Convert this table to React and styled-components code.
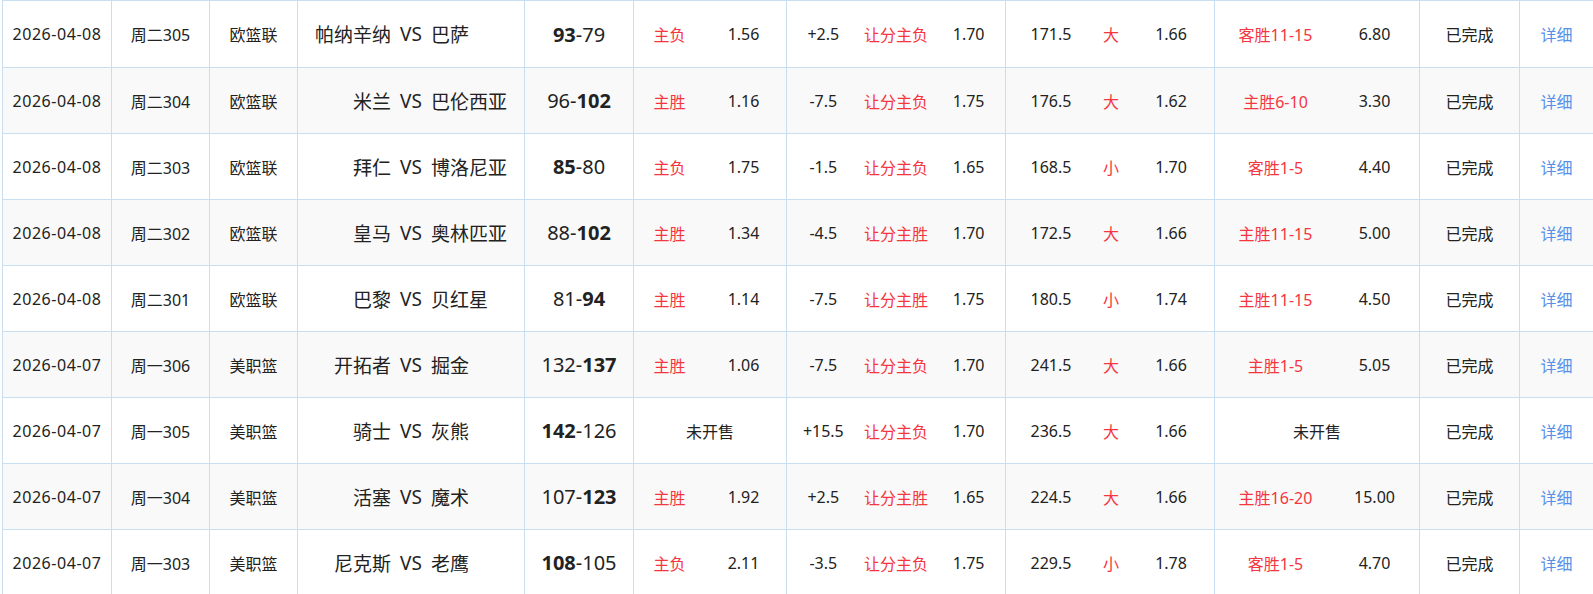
import React from "react";
import styled, { createGlobalStyle } from "styled-components";

const BORDER = "#c9def1";
const RED = "#f5363f";
const TEXT = "#222";
const BLUE = "#5690ea";

const GlobalStyle = createGlobalStyle`
  html, body {
    margin: 0;
    padding: 0;
    background: #fff;
    overflow: hidden;
  }
  body {
    font-family: "Noto Sans", "Noto Sans CJK SC", sans-serif;
    color: ${TEXT};
  }
  * { box-sizing: border-box; }
`;

const Table = styled.div`
  margin-left: 2px;
  width: 1592px;
  border-left: 1px solid ${BORDER};
  border-top: 1px solid ${BORDER};
`;

const Row = styled.div`
  display: grid;
  grid-template-columns: 109px 98px 88px 227px 109px 153px 219px 209px 205px 100px 74px;
  height: 66px;
  border-bottom: 1px solid ${BORDER};
  background: ${(p) => (p.$alt ? "#f9f9f9" : "#ffffff")};
  &:first-child {
    height: 67px;
  }
`;

const Cell = styled.div`
  display: flex;
  align-items: center;
  justify-content: center;
  border-right: 1px solid ${BORDER};
  font-size: 16px;
  white-space: nowrap;
  min-width: 0;
`;

const DateCell = styled(Cell)`
  letter-spacing: 0.55px;
`;

const Matchup = styled(Cell)`
  display: grid;
  grid-template-columns: 1fr auto 1fr;
  column-gap: 9px;
  align-items: center;
  font-size: 19px;
`;

const Home = styled.span`
  text-align: right;
`;

const Away = styled.span`
  text-align: left;
`;

const Vs = styled.span``;

const ScoreCell = styled(Cell)`
  font-size: 20px;
`;

const Win = styled.b`
  font-weight: 700;
`;

const Lose = styled.span`
  font-weight: 400;
`;

const Split = styled(Cell)`
  display: grid;
  grid-template-columns: ${(p) => p.$cols};
  justify-content: start;
  align-items: center;
  padding-left: ${(p) => p.$pad || 0}px;
`;

const Item = styled.span`
  text-align: center;
  color: ${(p) => (p.$red ? RED : TEXT)};
`;

const Detail = styled.a`
  color: ${BLUE};
  text-decoration: none;
  cursor: pointer;
`;

const rows = [
  { d: "2026-04-08", no: "周二305", lg: "欧篮联", h: "帕纳辛纳", a: "巴萨", hs: "93", as: "79", w: "h", r: ["主负", "1.56"], hc: ["+2.5", "让分主负", "1.70"], ou: ["171.5", "大", "1.66"], m: ["客胜11-15", "6.80"] },
  { d: "2026-04-08", no: "周二304", lg: "欧篮联", h: "米兰", a: "巴伦西亚", hs: "96", as: "102", w: "a", r: ["主胜", "1.16"], hc: ["-7.5", "让分主负", "1.75"], ou: ["176.5", "大", "1.62"], m: ["主胜6-10", "3.30"] },
  { d: "2026-04-08", no: "周二303", lg: "欧篮联", h: "拜仁", a: "博洛尼亚", hs: "85", as: "80", w: "h", r: ["主负", "1.75"], hc: ["-1.5", "让分主负", "1.65"], ou: ["168.5", "小", "1.70"], m: ["客胜1-5", "4.40"] },
  { d: "2026-04-08", no: "周二302", lg: "欧篮联", h: "皇马", a: "奥林匹亚", hs: "88", as: "102", w: "a", r: ["主胜", "1.34"], hc: ["-4.5", "让分主胜", "1.70"], ou: ["172.5", "大", "1.66"], m: ["主胜11-15", "5.00"] },
  { d: "2026-04-08", no: "周二301", lg: "欧篮联", h: "巴黎", a: "贝红星", hs: "81", as: "94", w: "a", r: ["主胜", "1.14"], hc: ["-7.5", "让分主胜", "1.75"], ou: ["180.5", "小", "1.74"], m: ["主胜11-15", "4.50"] },
  { d: "2026-04-07", no: "周一306", lg: "美职篮", h: "开拓者", a: "掘金", hs: "132", as: "137", w: "a", r: ["主胜", "1.06"], hc: ["-7.5", "让分主负", "1.70"], ou: ["241.5", "大", "1.66"], m: ["主胜1-5", "5.05"] },
  { d: "2026-04-07", no: "周一305", lg: "美职篮", h: "骑士", a: "灰熊", hs: "142", as: "126", w: "h", r: null, hc: ["+15.5", "让分主负", "1.70"], ou: ["236.5", "大", "1.66"], m: null },
  { d: "2026-04-07", no: "周一304", lg: "美职篮", h: "活塞", a: "魔术", hs: "107", as: "123", w: "a", r: ["主胜", "1.92"], hc: ["+2.5", "让分主胜", "1.65"], ou: ["224.5", "大", "1.66"], m: ["主胜16-20", "15.00"] },
  { d: "2026-04-07", no: "周一303", lg: "美职篮", h: "尼克斯", a: "老鹰", hs: "108", as: "105", w: "h", r: ["主负", "2.11"], hc: ["-3.5", "让分主负", "1.75"], ou: ["229.5", "小", "1.78"], m: ["客胜1-5", "4.70"] },
];

function Score({ hs, as, w }) {
  return (
    <ScoreCell>
      {w === "h" ? <Win>{hs}</Win> : <Lose>{hs}</Lose>}
      <Lose>-</Lose>
      {w === "a" ? <Win>{as}</Win> : <Lose>{as}</Lose>}
    </ScoreCell>
  );
}

export default function App() {
  return (
    <>
      <GlobalStyle />
      <Table>
        {rows.map((r, i) => (
          <Row key={i} $alt={i % 2 === 1}>
            <DateCell>{r.d}</DateCell>
            <Cell>{r.no}</Cell>
            <Cell>{r.lg}</Cell>
            <Matchup>
              <Home>{r.h}</Home>
              <Vs>VS</Vs>
              <Away>{r.a}</Away>
            </Matchup>
            <Score hs={r.hs} as={r.as} w={r.w} />
            {r.r ? (
              <Split $cols="71px 77px">
                <Item $red>{r.r[0]}</Item>
                <Item>{r.r[1]}</Item>
              </Split>
            ) : (
              <Cell>未开售</Cell>
            )}
            <Split $cols="1fr 1fr 1fr">
              <Item>{r.hc[0]}</Item>
              <Item $red>{r.hc[1]}</Item>
              <Item>{r.hc[2]}</Item>
            </Split>
            <Split $cols="60px 60px 60px" $pad={15}>
              <Item>{r.ou[0]}</Item>
              <Item $red>{r.ou[1]}</Item>
              <Item>{r.ou[2]}</Item>
            </Split>
            {r.m ? (
              <Split $cols="121px 77px">
                <Item $red>{r.m[0]}</Item>
                <Item>{r.m[1]}</Item>
              </Split>
            ) : (
              <Cell>未开售</Cell>
            )}
            <Cell>已完成</Cell>
            <Cell>
              <Detail>详细</Detail>
            </Cell>
          </Row>
        ))}
      </Table>
    </>
  );
}
